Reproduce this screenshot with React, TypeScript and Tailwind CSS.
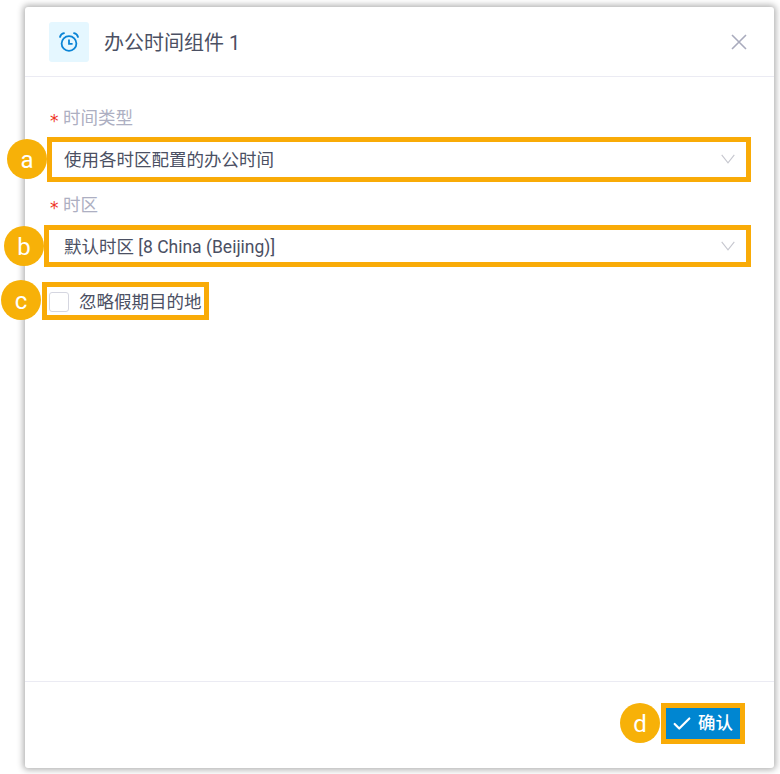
import { Check } from "lucide-react";

const font = "font-['Roboto','Noto_Sans_CJK_SC',sans-serif]";

function Badge({ letter, className }: { letter: string; className: string }) {
  return (
    <span
      className={`absolute flex h-10 w-10 items-center justify-center rounded-full bg-[#f7b108] pt-[2px] text-[24px] leading-none text-white ${className}`}
    >
      {letter}
    </span>
  );
}

function Chevron() {
  return (
    <svg width="14" height="10" viewBox="0 0 14 10" fill="none" stroke="#c6c7cf" strokeWidth="1.1">
      <path d="M0.7 0.8 L7 8.8 L13.3 0.8" />
    </svg>
  );
}

function ClockIcon() {
  return (
    <svg width="20" height="20" viewBox="0 0 20 20" fill="none" stroke="#0a84d6" strokeWidth="1.8">
      <circle cx="10" cy="11.5" r="7.4" />
      <path d="M10 7.5 V11.8 H13.6" />
      <path d="M1 5 C1.6 2.8 3 1.6 5 1.2" strokeLinecap="round" />
      <path d="M19 5 C18.4 2.8 17 1.6 15 1.2" strokeLinecap="round" />
    </svg>
  );
}

function FormSelect({ label, value }: { label: string; value: string }) {
  return (
    <div className="flex flex-col gap-[8px]">
      <div className="flex h-[35px] items-start pt-[9px] text-[17.5px] leading-[26px] text-[#adafc2]">
        <span className="mt-[3px] w-[14px] pl-px font-['DejaVu_Sans',sans-serif] text-[17px] text-[#ee3324]">*</span>
        {label}
      </div>
      <div className="flex h-[40px] items-center justify-between rounded-sm bg-white pl-[15px] pr-[15px] text-[17.5px] text-[#4b5063]">
        <span className="pt-[2px]">{value}</span>
        <Chevron />
      </div>
    </div>
  );
}

export default function App() {
  return (
    <div className={`relative h-[774px] w-[780px] overflow-hidden bg-white pl-[25px] pt-[7px] ${font}`}>
      <div className="flex h-[761px] w-[749px] flex-col rounded-[3px] bg-white shadow-[0_0_6px_2px_rgba(0,0,0,0.3)]">
        <div className="flex h-[70px] items-center justify-between border-b border-[#ebebf3] pl-[24px] pr-[27px]">
          <div className="flex items-center gap-[15px]">
            <div className="flex h-10 w-10 items-center justify-center rounded-[3px] bg-[#e5f7ff]">
              <ClockIcon />
            </div>
            <h1 className="pt-[2px] text-[20px] text-[#4b5063]">办公时间组件 1</h1>
          </div>
          <svg width="16" height="16" viewBox="0 0 16 16" fill="none" stroke="#a9abbd" strokeWidth="1.6">
            <path d="M1 1 L15 15 M15 1 L1 15" />
          </svg>
        </div>

        <div className="flex flex-1 flex-col px-[24px] pt-[19px]">
          <div className="flex flex-col gap-[4px]">
            <FormSelect label="时间类型" value="使用各时区配置的办公时间" />
            <FormSelect label="时区" value="默认时区 [8 China (Beijing)]" />
          </div>
          <label className="mt-[23px] flex items-center gap-[10px] text-[17.5px] text-[#4b5063]">
            <span className="h-[20px] w-[20px] rounded-[3px] border border-[#d5d6e0] bg-white" />
            忽略假期目的地
          </label>
        </div>

        <div className="flex h-[87px] items-center justify-end border-t border-[#ebebf3] pb-[3px] pr-[34px]">
          <button className="flex h-[31px] w-[74px] items-center justify-center gap-[5px] bg-[#0086d1] pr-[2px] text-[17.4px] font-medium text-white">
            <Check className="h-[22px] w-[22px]" strokeWidth={2.4} />
            确认
          </button>
        </div>
      </div>

      {/* annotation overlays */}
      <div className="absolute left-[47px] top-[137px] h-[45px] w-[704px] border-[5px] border-[#f9ab07]" />
      <div className="absolute left-[44px] top-[225px] h-[42px] w-[707px] border-[5px] border-[#f9ab07]" />
      <div className="absolute left-[42px] top-[282px] h-[38px] w-[167px] border-[5px] border-[#f9ab07]" />
      <div className="absolute left-[661px] top-[703px] h-[41px] w-[84px] border-[5px] border-[#f9ab07]" />
      <Badge letter="a" className="left-[7px] top-[139px]" />
      <Badge letter="b" className="left-[4px] top-[226px]" />
      <Badge letter="c" className="left-[1px] top-[280px]" />
      <Badge letter="d" className="left-[620px] top-[703px]" />
    </div>
  );
}
